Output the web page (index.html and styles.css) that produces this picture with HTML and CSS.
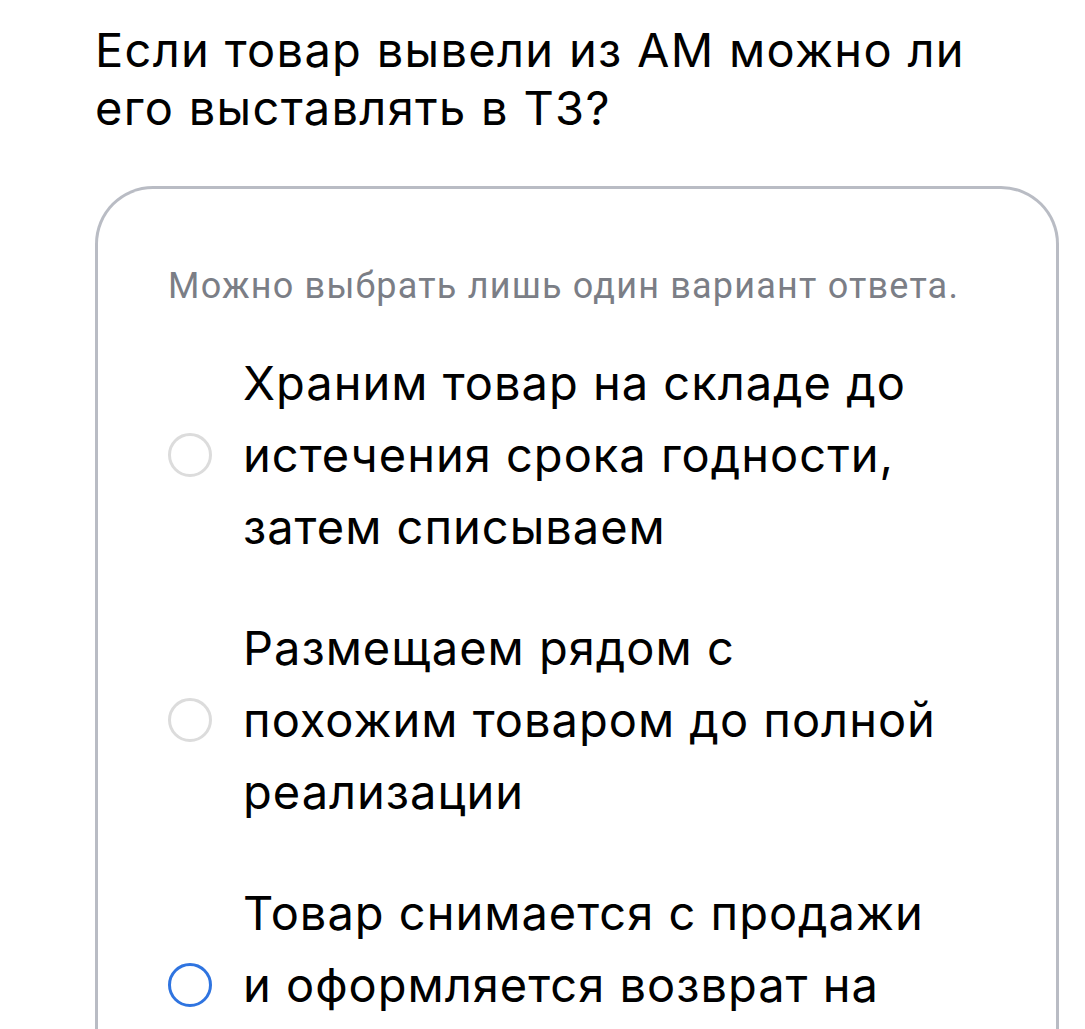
FILE: index.html
```html
<!DOCTYPE html>
<html lang="ru">
  <head>
    <meta charset="utf-8" />
    <title>Вопрос</title>
    <link rel="stylesheet" href="styles.css">
  </head>
  <body>
    <div class="page">
      <h1 class="question">Если товар вывели из АМ можно ли его выставлять в ТЗ?</h1>
      <div class="card">
        <div class="hint">Можно выбрать лишь один вариант ответа.</div>
        <label class="option">
          <span class="radio"></span>
          <span class="option-text">Храним товар на складе до истечения срока годности, затем списываем</span>
        </label>
        <label class="option">
          <span class="radio"></span>
          <span class="option-text">Размещаем рядом с похожим товаром до полной реализации</span>
        </label>
        <label class="option">
          <span class="radio focused"></span>
          <span class="option-text">Товар снимается с продажи и оформляется возврат на склад</span>
        </label>
      </div>
    </div>
  </body>
</html>
```

FILE: styles.css
```css
body {
  margin: 0;
  background: #fff;
  color: #000;
  font-family: Inter, "Noto Sans", sans-serif;
}

.page {
  padding: 21px 26px 0 95px;
}

.question {
  margin: 0;
  max-width: 900px;
  font-size: 47px;
  line-height: 58px;
  font-weight: 400;
  letter-spacing: 1.3px;
}

.card {
  margin-top: 49px;
  height: 1000px;
  padding: 77px 70px 0 70px;
  border: 3px solid #b9bcc4;
  border-bottom: none;
  border-radius: 58px 58px 0 0;
}

.hint {
  font-family: Roboto, sans-serif;
  font-size: 36px;
  line-height: 40px;
  letter-spacing: 1.2px;
  color: #7b7e86;
}

.option {
  display: flex;
  align-items: center;
  gap: 31px;
  margin-top: 41px;
}

.option + .option {
  margin-top: 49px;
}

.radio {
  flex: none;
  width: 44px;
  height: 44px;
  box-sizing: border-box;
  border: 3px solid #dcdcdc;
  border-radius: 50%;
}

.radio.focused {
  border-color: #2f74e0;
}

.option-text {
  max-width: 705px;
  font-size: 47px;
  line-height: 72px;
  letter-spacing: 1px;
}
```
